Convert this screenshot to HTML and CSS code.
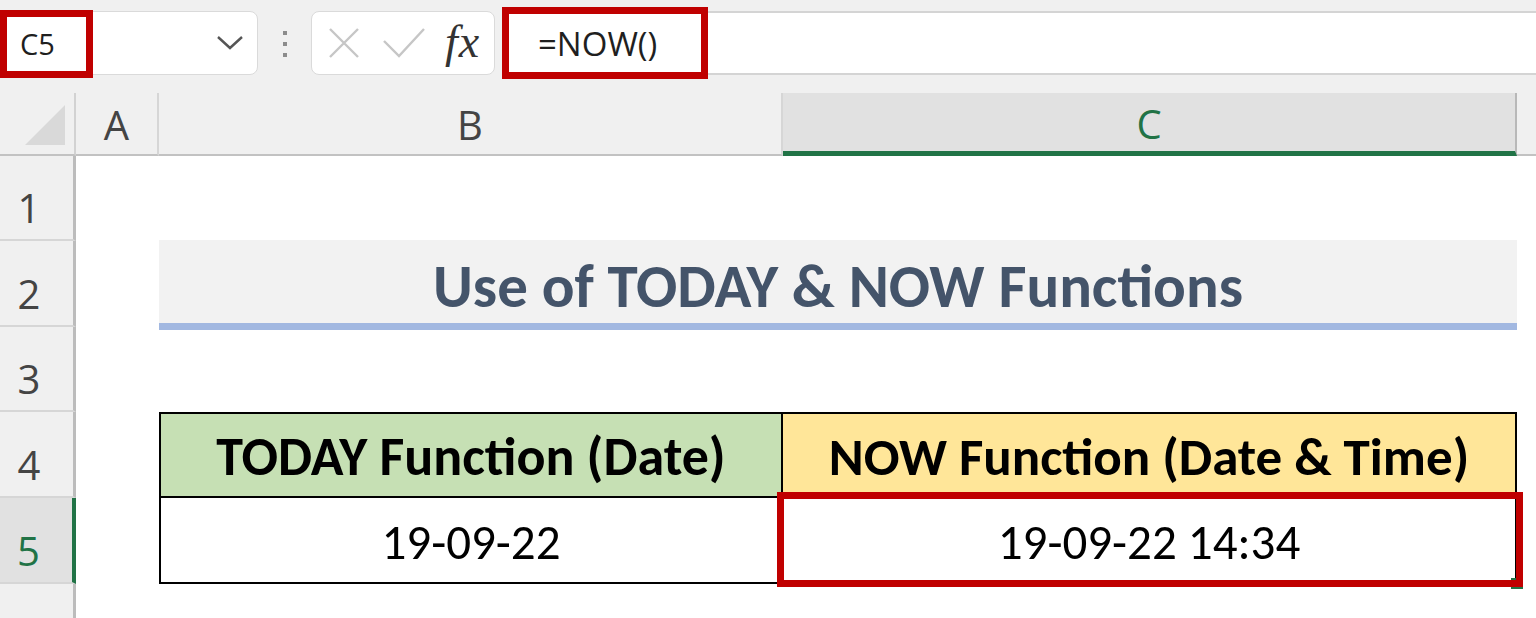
FILE: index.html
```html
<!DOCTYPE html>
<html lang="en">
<head>
    <meta charset="UTF-8">
    <meta name="viewport" content="width=device-width, initial-scale=1.0">
    <title>TODAY &amp; NOW Functions</title>
    <link rel="stylesheet" href="styles.css">
</head>
<body>
    <div class="formula-row">
        <div class="namebox">
            <span class="ref">C5</span>
            <svg class="chevron" width="26" height="14" viewBox="0 0 26 14"><path d="M1 1 L13 12 L25 1" /></svg>
            <div class="mark"></div>
        </div>
        <div class="grip"><i></i><i></i><i></i></div>
        <div class="fx-tools">
            <svg class="cancel" width="32" height="32" viewBox="0 0 32 32"><path d="M2 2 L30 30 M30 2 L2 30" /></svg>
            <svg class="enter" width="42" height="30" viewBox="0 0 42 30"><path d="M1 13 L16 28 L41 1" /></svg>
            <span class="fx">fx</span>
        </div>
        <div class="formula">
            <span class="expr">=NOW()</span>
            <div class="mark"></div>
        </div>
    </div>

    <div class="sheet">
        <!-- column headers -->
        <div class="corner">
            <svg width="76" height="61" viewBox="0 0 76 61"><polygon points="25,52 65,52 65,12" /></svg>
        </div>
        <div class="col-head">A</div>
        <div class="col-head">B</div>
        <div class="col-head on">C</div>
        <div class="col-head last"></div>

        <!-- row 1 -->
        <div class="row-head">1</div>
        <div class="cell"></div><div class="cell"></div><div class="cell"></div><div class="cell"></div>

        <!-- row 2 -->
        <div class="row-head">2</div>
        <div class="cell"></div>
        <div class="title">Use of TODAY &amp; NOW Functions</div>
        <div class="cell"></div>

        <!-- row 3 -->
        <div class="row-head">3</div>
        <div class="cell"></div><div class="cell"></div><div class="cell"></div><div class="cell"></div>

        <!-- row 4 -->
        <div class="row-head">4</div>
        <div class="cell"></div>
        <div class="th today">TODAY Function (Date)</div>
        <div class="th now">NOW Function (Date &amp; Time)</div>
        <div class="cell"></div>

        <!-- row 5 -->
        <div class="row-head on">5</div>
        <div class="cell"></div>
        <div class="td today">19-09-22</div>
        <div class="td now">
            19-09-22 14:34
            <div class="handle"></div>
            <div class="mark"></div>
        </div>
        <div class="cell"></div>

        <!-- row 6 -->
        <div class="row-head last"></div>
        <div class="cell"></div><div class="cell"></div><div class="cell"></div><div class="cell"></div>
    </div>
</body>
</html>
```

FILE: styles.css
```css
* {
    box-sizing: border-box;
}

body {
    margin: 0;
    width: 1536px;
    height: 618px;
    overflow: hidden;
    background: #f0f0f0;
    font-family: "Open Sans", "Noto Sans", sans-serif;
    color: #222;
}

/* red highlight boxes drawn over the UI */
.mark {
    position: absolute;
    border: 7px solid #c00000;
    pointer-events: none;
}

/* ---------- formula bar ---------- */

.formula-row {
    display: flex;
    align-items: flex-start;
    height: 93px;
    padding-top: 11px;
}

.namebox {
    position: relative;
    display: flex;
    align-items: center;
    justify-content: space-between;
    width: 256px;
    height: 64px;
    margin-left: 2px;
    padding: 0 14px 0 17px;
    background: #fff;
    border: 1px solid #dadada;
    border-radius: 8px;
}

.namebox .ref {
    font-size: 29px;
    color: #1f1f1f;
}

.namebox .mark {
    left: -3px;
    top: -2px;
    width: 93px;
    height: 68px;
}

.chevron path {
    fill: none;
    stroke: #555;
    stroke-width: 2.4;
}

.grip {
    display: flex;
    flex-direction: column;
    align-items: center;
    gap: 7px;
    width: 53px;
    padding-top: 20px;
}

.grip i {
    width: 4px;
    height: 4px;
    background: #8c8c8c;
}

.fx-tools {
    display: flex;
    align-items: center;
    width: 184px;
    height: 64px;
    padding-left: 16px;
    background: #fff;
    border: 1px solid #dadada;
    border-radius: 8px;
}

.fx-tools path {
    fill: none;
    stroke: #c6c6c6;
    stroke-width: 2.4;
}

.fx-tools .enter {
    margin-left: 23px;
}

.fx {
    margin: -4px 0 0 20px;
    font-family: "Liberation Serif", serif;
    font-style: italic;
    font-size: 46px;
    letter-spacing: 1px;
    color: #333;
}

.formula {
    position: relative;
    flex: 1;
    display: flex;
    align-items: center;
    height: 64px;
    margin-left: 11px;
    padding-left: 32px;
    background: #fff;
    border-top: 2px solid #d4d4d4;
    border-bottom: 2px solid #d4d4d4;
}

.formula .expr {
    font-size: 33px;
    color: #1f1f1f;
}

.formula .mark {
    left: -4px;
    top: -6px;
    width: 206px;
    height: 72px;
}

/* ---------- sheet ---------- */

.sheet {
    display: grid;
    grid-template-columns: 76px 83px 624px 734px 1fr;
    grid-template-rows: 63px 85px 86px 85px 86px 86px 1fr;
    height: 525px;
    background: #fff;
}

.corner,
.col-head {
    background: #f0f0f0;
    border-bottom: 2px solid #c2c2c2;
}

.corner {
    border-right: 2px solid #d2d2d2;
}

.corner polygon {
    fill: #d9d9d9;
}

.col-head {
    display: flex;
    align-items: center;
    justify-content: center;
    padding-top: 2px;
    font-size: 40px;
    color: #444;
    border-right: 2px solid #d6d6d6;
}

.col-head.on {
    background: #e1e1e1;
    color: #217346;
    border-right-color: #b8b8b8;
    border-bottom: 5px solid #217346;
}

.col-head.last {
    border-right: none;
}

.row-head {
    display: flex;
    align-items: center;
    justify-content: center;
    padding: 20px 15px 0 0;
    background: #f0f0f0;
    border-right: 3px solid #bcbcbc;
    border-bottom: 2px solid #d6d6d6;
    font-size: 40px;
    color: #444;
}

.row-head.on {
    background: #e1e1e1;
    color: #217346;
    border-right: 4px solid #217346;
}

.row-head.last {
    border-bottom: none;
}

.title {
    grid-column: span 2;
    display: flex;
    align-items: center;
    justify-content: center;
    margin: -1px 0 -3px;
    padding-top: 8px;
    background: #f2f2f2;
    border-bottom: 7px solid #a2b8e1;
    font-family: "Carlito", "Lato", sans-serif;
    font-weight: bold;
    font-size: 61px;
    color: #44546a;
}

.th,
.td {
    display: flex;
    align-items: center;
    justify-content: center;
    font-family: "Carlito", "Lato", sans-serif;
    color: #000;
    border-right: 2px solid #000;
    border-bottom: 2px solid #000;
}

.th {
    padding-top: 4px;
    border-top: 2px solid #000;
    font-weight: bold;
    font-size: 53px;
}

.th.today,
.td.today {
    border-left: 2px solid #000;
}

.th.today {
    background: #c6e0b4;
    font-size: 54px;
}

.th.now {
    background: #ffe699;
}

.td {
    position: relative;
    padding-top: 4px;
    font-size: 49px;
    background: #fff;
}

.td .mark {
    left: -6px;
    top: -6px;
    width: 746px;
    height: 95px;
}

.td .handle {
    position: absolute;
    left: 728px;
    top: 80px;
    width: 12px;
    height: 11px;
    background: #217346;
}
```
